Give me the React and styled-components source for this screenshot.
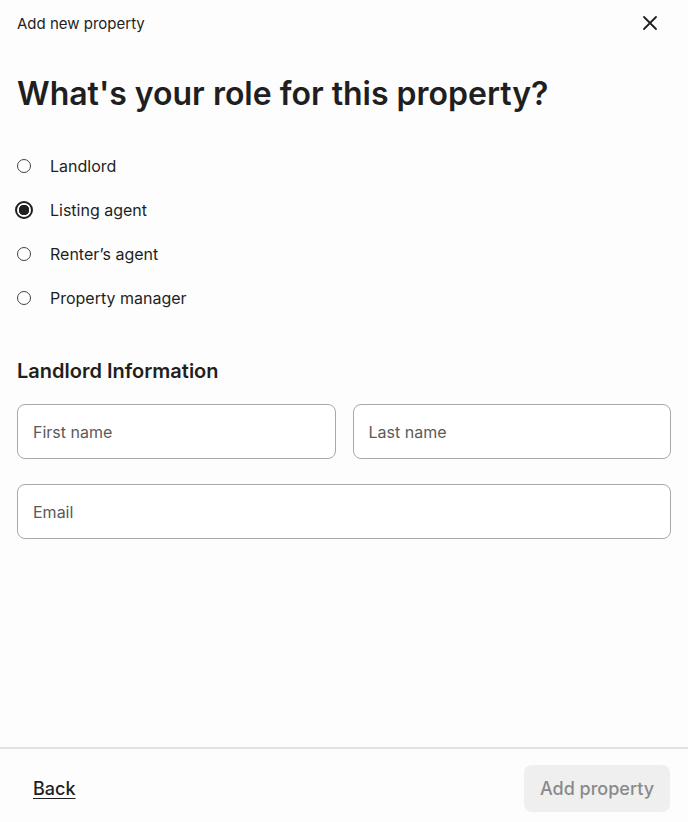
import React, { useState } from "react";
import styled, { createGlobalStyle } from "styled-components";

const GlobalStyle = createGlobalStyle`
  html, body {
    margin: 0;
    padding: 0;
    background: #fdfdfd;
  }
  * { box-sizing: border-box; }
  body {
    font-family: Inter, "Noto Sans", sans-serif;
    color: #1f1f1f;
  }
`;

const roles = ["Landlord", "Listing agent", "Renter’s agent", "Property manager"];

const App = () => {
  const [role, setRole] = useState("Listing agent");
  return (
    <>
      <GlobalStyle />
      <Page>
        <Header>
          <HeaderTitle>Add new property</HeaderTitle>
          <CloseButton aria-label="Close">
            <svg width="16" height="16" viewBox="0 0 16 16" fill="none">
              <path d="M2 2L14 14M14 2L2 14" stroke="#1f1f1f" strokeWidth="1.8" strokeLinecap="round" />
            </svg>
          </CloseButton>
        </Header>

        <Body>
          <Heading>What's your role for this property?</Heading>

          <RadioList>
            {roles.map((r) => (
              <RadioRow key={r} onClick={() => setRole(r)}>
                <Radio checked={role === r} />
                <RadioLabel>{r}</RadioLabel>
              </RadioRow>
            ))}
          </RadioList>

          <SubHeading>Landlord Information</SubHeading>

          <FieldGrid>
            <Field placeholder="First name" />
            <Field placeholder="Last name" />
            <Field placeholder="Email" wide />
          </FieldGrid>
        </Body>

        <Footer>
          <BackLink href="#">Back</BackLink>
          <SubmitButton disabled>Add property</SubmitButton>
        </Footer>
      </Page>
    </>
  );
};

export default App;

const Page = styled.div`
  width: 688px;
  height: 822px;
  display: flex;
  flex-direction: column;
  background: #fdfdfd;
`;

const Header = styled.div`
  height: 46px;
  padding: 0 30px 0 17px;
  display: flex;
  align-items: center;
  justify-content: space-between;
`;

const HeaderTitle = styled.div`
  font-size: 15px;
  color: #1f1f1f;
`;

const CloseButton = styled.button`
  border: none;
  background: none;
  padding: 0;
  display: flex;
  cursor: pointer;
`;

const Body = styled.div`
  flex: 1;
  padding: 0 17px;
`;

const Heading = styled.h1`
  margin: 28px 0 0;
  font-size: 32px;
  line-height: 40px;
  font-weight: 600;
  color: #1f1f1f;
`;

const RadioList = styled.div`
  margin-top: 30px;
  display: flex;
  flex-direction: column;
`;

const RadioRow = styled.label`
  height: 44px;
  display: flex;
  align-items: center;
  gap: 19px;
  cursor: pointer;
`;

const Radio = styled.span`
  width: 14px;
  height: 18px;
  display: flex;
  align-items: center;
  justify-content: center;
  flex-shrink: 0;
  &::before {
    content: "";
    display: block;
    flex-shrink: 0;
    border-radius: 50%;
    box-sizing: border-box;
    width: ${(p) => (p.checked ? "18px" : "14px")};
    height: ${(p) => (p.checked ? "18px" : "14px")};
    border: ${(p) => (p.checked ? "2px solid #1f1f1f" : "1.5px solid #444")};
    background: ${(p) =>
      p.checked ? "radial-gradient(circle, #1f1f1f 0 5px, #fff 5.5px)" : "#fff"};
  }
`;

const RadioLabel = styled.span`
  font-size: 16px;
  color: #1f1f1f;
`;

const SubHeading = styled.h2`
  margin: 38px 0 0;
  font-size: 20px;
  line-height: 26px;
  font-weight: 600;
  color: #1f1f1f;
`;

const FieldGrid = styled.div`
  margin-top: 20px;
  display: grid;
  grid-template-columns: 1fr 1fr;
  column-gap: 17px;
  row-gap: 25px;
`;

const Field = styled.input`
  grid-column: ${(p) => (p.wide ? "1 / -1" : "auto")};
  height: 55px;
  width: 100%;
  padding: 0 15px;
  border: 1px solid #a8a8a8;
  border-radius: 8px;
  background: #fff;
  font-family: Inter, "Noto Sans", sans-serif;
  font-size: 16px;
  color: #1f1f1f;
  outline: none;
  &::placeholder {
    color: #5a5a5a;
  }
`;

const Footer = styled.div`
  height: 75px;
  border-top: 2px solid #e2e2e2;
  padding: 6px 18px 0 33px;
  display: flex;
  align-items: center;
  justify-content: space-between;
`;

const BackLink = styled.a`
  font-size: 18px;
  font-weight: 500;
  color: #1f1f1f;
  text-decoration: underline;
  text-underline-offset: 3px;
`;

const SubmitButton = styled.button`
  height: 47px;
  padding: 0 16px;
  border: none;
  border-radius: 8px;
  background: #efefef;
  color: #8a8a8a;
  font-family: Inter, "Noto Sans", sans-serif;
  font-size: 18px;
  font-weight: 500;
`;
